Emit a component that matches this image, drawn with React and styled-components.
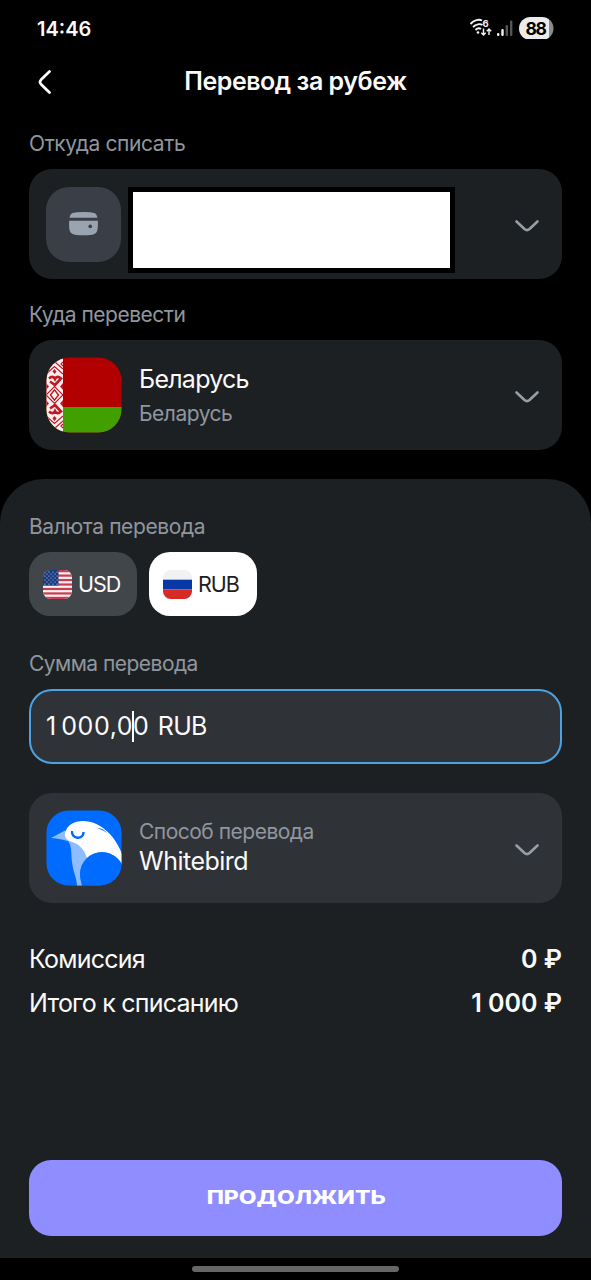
import { useState } from "react";
import styled, { createGlobalStyle } from "styled-components";

// one half of the woven band, the other half is its mirror
const OrnamentHalf = () => (
    <g fill="none" stroke="#c01824" strokeWidth="1.200">
        <path d="M8.500 33L12.500 38L8.500 43L4.500 38Z" />
        <path d="M0 38L8.500 29.500L17 38" />
        <path d="M3 21.500Q7 18 9 22Q11 18 15 21.500L9 28L4 24.500" strokeWidth="2.600" />
        <path d="M0 17L8.500 9.500L17 17M0 12L8.500 4.500L17 12" />
        <path d="M8.500 -2L12 1L8.500 4L5 1Z" />
        <path d="M8.500 12L10.500 14.500L8.500 17L6.500 14.500Z" fill="#c01824" stroke="none" />
        <path d="M0 26L3 29.500L0 33ZM17 26L14 29.500L17 33Z" fill="#c01824" stroke="none" />
        <path d="M17 5L15 7L17 9" />
    </g>
);

const BelarusFlag = () => (
    <svg width="76" height="76" viewBox="0 0 76 76">
        <defs>
            <clipPath id="byClip"><rect x="0.500" y="0.500" width="75" height="75" rx="23" /></clipPath>
            <clipPath id="bandClip"><rect width="17" height="76" /></clipPath>
        </defs>
        <g clipPath="url(#byClip)">
            <rect width="76" height="76" fill="#b20000" />
            <rect y="50" width="76" height="26" fill="#429f00" />
            <g clipPath="url(#bandClip)">
                <rect width="17" height="76" fill="#fbeeee" />
                <OrnamentHalf />
                <g transform="matrix(1 0 0 -1 0 76)"><OrnamentHalf /></g>
            </g>
        </g>
    </svg>
);

const stripes = [0, 2, 4, 6, 8, 10, 12];
const stars = [0, 1, 2, 3, 4, 5, 6];

const UsaFlag = () => (
    <svg width="29" height="29" viewBox="0 0 30 30">
        <defs><clipPath id="usClip"><rect width="30" height="30" rx="8" /></clipPath></defs>
        <g clipPath="url(#usClip)">
            <rect width="30" height="30" fill="#f7f1f3" />
            {stripes.map((i) => <rect key={i} y={i * 2.31} width="30" height="2.31" fill="#c73e50" />)}
            <rect width="16" height="16" fill="#17397f" />
            {stars.map((row) => stars.map((col) => (
                (row + col) % 2 === 0 && <circle key={`${row}-${col}`} cx={2 + col * 2.1} cy={2 + row * 2.1} r="0.55" fill="#fff" />
            )))}
        </g>
    </svg>
);

const RussiaFlag = () => (
    <svg width="29" height="29" viewBox="0 0 30 30">
        <defs><clipPath id="ruClip"><rect width="30" height="30" rx="8" /></clipPath></defs>
        <g clipPath="url(#ruClip)">
            <rect width="30" height="10" fill="#f1f2f4" />
            <rect y="10" width="30" height="10" fill="#0739a6" />
            <rect y="20" width="30" height="10" fill="#d62a25" />
        </g>
    </svg>
);

const BirdLogo = () => (
    <svg width="76" height="76" viewBox="0 0 76 76">
        <defs><clipPath id="birdClip"><rect x="0.500" y="0.500" width="75" height="75" rx="22" /></clipPath></defs>
        <g clipPath="url(#birdClip)">
            <rect width="76" height="76" fill="#006cff" />
            <path d="M22 31C26 36 25 44 26 52C27 62 31 68 31 76H36C34 68 33 61 37 54L44 45L34 34Z" fill="#8fbcff" />
            <path d="M5 28L19 20.500L27 32C20 31 15 28.500 5 28Z" fill="#8fbcff" />
            <path d="M19 23C21 15 28 11 37 11C55 11 70 27 76 44V54C67 40 51 39 41 48C38 39 33 34 26 32C22 31 18 28 19 23Z" fill="#fff" />
            <path d="M26 21C25 29.500 38 30 37.500 22" fill="none" stroke="#006cff" strokeWidth="2.400" />
            <path d="M50 17.500C55 18 59 20 61 23C57 20 53 19 50 17.500Z" fill="#006cff" />
            <circle cx="56" cy="64" r="22" fill="#006cff" />
        </g>
    </svg>
);

const WalletIcon = () => (
    <svg width="29" height="24" viewBox="0 0 30 25">
        <path d="M0.500 6C1 2 3.500 0.500 8 0.300Q15 -0.200 22 0.300C26.500 0.500 29 2 29.500 6ZM0 9H30V14C30 21 28 23.500 22 24Q15 24.600 8 24C2 23.500 0 21 0 14Z" fill="#9aa3b0" />
        <circle cx="22" cy="15" r="1.900" fill="#3a3e47" />
    </svg>
);

const Chevron = () => (
    <svg width="26" height="14" viewBox="0 0 26 14">
        <path d="M2.500 2.500L10.500 10Q13 12.200 15.500 10L23.500 2.500" fill="none" stroke="#969fa8" strokeWidth="2.600" strokeLinecap="round" />
    </svg>
);

const StatusIcons = () => (
    <svg width="86" height="26" viewBox="0 0 86 26">
        <g fill="none" stroke="#f4f4f4" strokeWidth="1.900">
            <path d="M1.500 11C5 7 10 6 13 7.500" />
            <path d="M4 14C7 11 11 10.500 13.500 12" />
            <path d="M6.500 17C8.500 15 10.500 15 12 16" />
            <path d="M14.500 15.500V22M12.300 19.800L14.500 22L16.700 19.800M20 22V16M17.800 18.200L20 16L22.200 18.200" strokeWidth="1.400" />
        </g>
        <circle cx="9" cy="19.500" r="1.300" fill="#f4f4f4" />
        <text x="13.500" y="14" fontFamily="Inter, sans-serif" fontSize="9.500" fontWeight="700" fill="#f4f4f4">6</text>
        <rect x="28" y="20" width="2.400" height="3" rx="1" fill="#f4f4f4" />
        <rect x="32.300" y="16" width="2.400" height="7" rx="1" fill="#f4f4f4" />
        <rect x="36.600" y="12" width="2.400" height="11" rx="1" fill="#555" />
        <rect x="41" y="7.500" width="2.400" height="15.500" rx="1" fill="#555" />
        <defs><clipPath id="batteryClip"><rect x="50" y="4" width="34.500" height="23" rx="11.500" /></clipPath></defs>
        <g clipPath="url(#batteryClip)">
            <rect x="50" y="4" width="30" height="23" fill="#ececec" />
            <rect x="80" y="4" width="6" height="23" fill="#8b8b8b" />
        </g>
        <text x="56.500" y="22" fontFamily="Inter, sans-serif" fontSize="17.500" fontWeight="700" fill="#000" textLength="21.500">88</text>
    </svg>
);

const App = () => {
    const [currency, setCurrency] = useState("RUB");

    return (
        <Screen>
            <GlobalStyle />
            <StatusBar>
                <Time>14:46</Time>
                <StatusIcons />
            </StatusBar>
            <Header>
                <BackButton aria-label="Назад">
                    <svg width="14" height="26" viewBox="0 0 14 26">
                        <path d="M11.500 2.500L3 10.800Q1 13 3 15.200L11.500 23.500" fill="none" stroke="#fff" strokeWidth="2.700" strokeLinecap="round" />
                    </svg>
                </BackButton>
                <Title>Перевод за рубеж</Title>
            </Header>

            <Top>
                <Label $track="-0.4px">Откуда списать</Label>
                <Card>
                    <IconTile><WalletIcon /></IconTile>
                    <HiddenAccount />
                    <Chevron />
                </Card>
                <Label $gap="23px">Куда перевести</Label>
                <Card>
                    <BelarusFlag />
                    <CardText $gap="6px" $drop="2px">
                        <CardTitle $track="-0.75px">Беларусь</CardTitle>
                        <CardNote>Беларусь</CardNote>
                    </CardText>
                    <Chevron />
                </Card>
            </Top>

            <Panel>
                <Label $track="-0.38px">Валюта перевода</Label>
                <Chips>
                    <Chip $active={currency === "USD"} onClick={() => setCurrency("USD")}><UsaFlag />USD</Chip>
                    <Chip $active={currency === "RUB"} onClick={() => setCurrency("RUB")}><RussiaFlag />RUB</Chip>
                </Chips>
                <Label $gap="35px" $track="-0.53px">Сумма перевода</Label>
                <AmountField>
                    <Digits>1 000,0</Digits>
                    <Caret />
                    <span>0</span>
                    <Unit>RUB</Unit>
                </AmountField>
                <Card $light>
                    <BirdLogo />
                    <CardText $gap="0" $lift="3px">
                        <CardNote>Способ перевода</CardNote>
                        <CardTitle>Whitebird</CardTitle>
                    </CardText>
                    <Chevron />
                </Card>
                <Totals>
                    <TotalRow><TotalName>Комиссия</TotalName><Sum>0 ₽</Sum></TotalRow>
                    <TotalRow><TotalName>Итого к списанию</TotalName><Sum>1 000 ₽</Sum></TotalRow>
                </Totals>
                <SubmitButton><span>ПРОДОЛЖИТЬ</span></SubmitButton>
            </Panel>
            <NavBar><Handle /></NavBar>
        </Screen>
    );
}

export default App;

const GlobalStyle = createGlobalStyle`
    * {
        box-sizing: border-box;
    }
    body {
        margin: 0;
        background: #000;
    }
    button {
        font: inherit;
        border: none;
        padding: 0;
        cursor: pointer;
    }
    svg {
        display: block;
        flex-shrink: 0;
    }
`

const Screen = styled.main`
    width: 591px;
    height: 1280px;
    display: flex;
    flex-direction: column;
    overflow: hidden;
    background: #000;
    color: #fafafa;
    font-family: Inter, "Liberation Sans", sans-serif;
`

const StatusBar = styled.div`
    height: 54px;
    display: flex;
    align-items: flex-start;
    justify-content: space-between;
    padding: 13px 36px 0 37px;
`

const Time = styled.span`
    font-size: 20px;
    line-height: 32px;
    font-weight: 600;
`

const Header = styled.header`
    height: 54px;
    display: grid;
    grid-template-columns: 60px 1fr 60px;
    align-items: center;
`

const BackButton = styled.button`
    background: none;
    padding: 1px 0 0 38px;
`

const Title = styled.h1`
    margin: 0;
    font-size: 25px;
    font-weight: 600;
    line-height: 30px;
    letter-spacing: -0.47px;
    text-align: center;
    white-space: nowrap;
`

const Top = styled.section`
    height: 371px;
    padding: 23px 29px 0;
`

const Label = styled.div`
    margin-top: ${({ $gap }) => $gap || "0"};
    height: 29px;
    margin-bottom: 9px;
    font-size: 21px;
    line-height: 26px;
    color: #8f969e;
    letter-spacing: ${({ $track }) => $track || "-0.5px"};
`

const Card = styled.div`
    height: 110px;
    display: flex;
    align-items: center;
    padding: 0 22px 0 17px;
    border-radius: 23px;
    background: ${({ $light }) => ($light ? "#2f3237" : "#1d2023")};

    > svg:last-child {
        margin: 3px 0 0 auto;
    }
`

const IconTile = styled.div`
    width: 75px;
    height: 75px;
    display: flex;
    align-items: center;
    justify-content: center;
    border-radius: 23px;
    background: #3a3e46;
`

const HiddenAccount = styled.div`
    width: 327px;
    height: 86px;
    margin: 12px 0 0 7px;
    border: 5px solid #000;
    background: #fff;
`

const CardText = styled.div`
    margin-left: 17px;
    padding-top: ${({ $drop }) => $drop || "0"};
    padding-bottom: ${({ $lift }) => $lift || "0"};

    > :last-child {
        margin-top: ${({ $gap }) => $gap};
    }
`

const CardTitle = styled.div`
    font-size: 25px;
    line-height: 30px;
    color: #fafafa;
    letter-spacing: ${({ $track }) => $track || "-0.5px"};
`

const CardNote = styled.div`
    font-size: 21px;
    line-height: 28px;
    color: #8f969e;
    letter-spacing: -0.5px;
`

const Panel = styled.section`
    height: 779px;
    padding: 35px 29px 22px;
    display: flex;
    flex-direction: column;
    border-radius: 44px 44px 0 0;
    background: #1d2023;
`

const Chips = styled.div`
    display: flex;
    gap: 12px;
`

const Chip = styled.button`
    width: 108px;
    height: 64px;
    display: flex;
    align-items: center;
    gap: 6px;
    padding-left: 14px;
    border-radius: 21px;
    font-size: 21.5px;
    letter-spacing: -1px;
    color: ${({ $active }) => ($active ? "#1d2023" : "#fafafa")};
    background: ${({ $active }) => ($active ? "#fff" : "#41464b")};
`

const AmountField = styled.div`
    height: 75px;
    display: flex;
    align-items: center;
    margin-bottom: 29px;
    padding: 0 0 2px 15px;
    border: 2px solid #4ba3e3;
    border-radius: 23px;
    background: #2f3237;
    font-size: 25px;
    white-space: pre;
`

const Digits = styled.span`
    letter-spacing: 0.55px;
    word-spacing: -3px;
`

const Unit = styled.span`
    margin-left: 9px;
    letter-spacing: -0.8px;
`

const Caret = styled.i`
    width: 2px;
    height: 31px;
    margin: 2px -1px 0;
    background: #fff;
`

const Totals = styled.div`
    margin-top: 34px;
`

const TotalRow = styled.div`
    height: 44px;
    display: flex;
    align-items: center;
    justify-content: space-between;
    font-size: 25px;
`

const TotalName = styled.span`
    letter-spacing: -0.77px;
`

const Sum = styled.b`
    font-weight: 600;
`

const SubmitButton = styled.button`
    height: 76px;
    margin-top: auto;
    padding: 0 0 2px 1px;
    border-radius: 22px;
    background: #8f8dff;
    color: #fff;
    font-size: 18.5px;
    font-weight: 800;

    span {
        display: inline-block;
        transform: scaleX(1.24);
    }
`

const NavBar = styled.div`
    height: 22px;
    display: flex;
    justify-content: center;
    padding-top: 8px;
`

const Handle = styled.div`
    width: 207px;
    height: 6px;
    border-radius: 3px;
    background: #666;
`
